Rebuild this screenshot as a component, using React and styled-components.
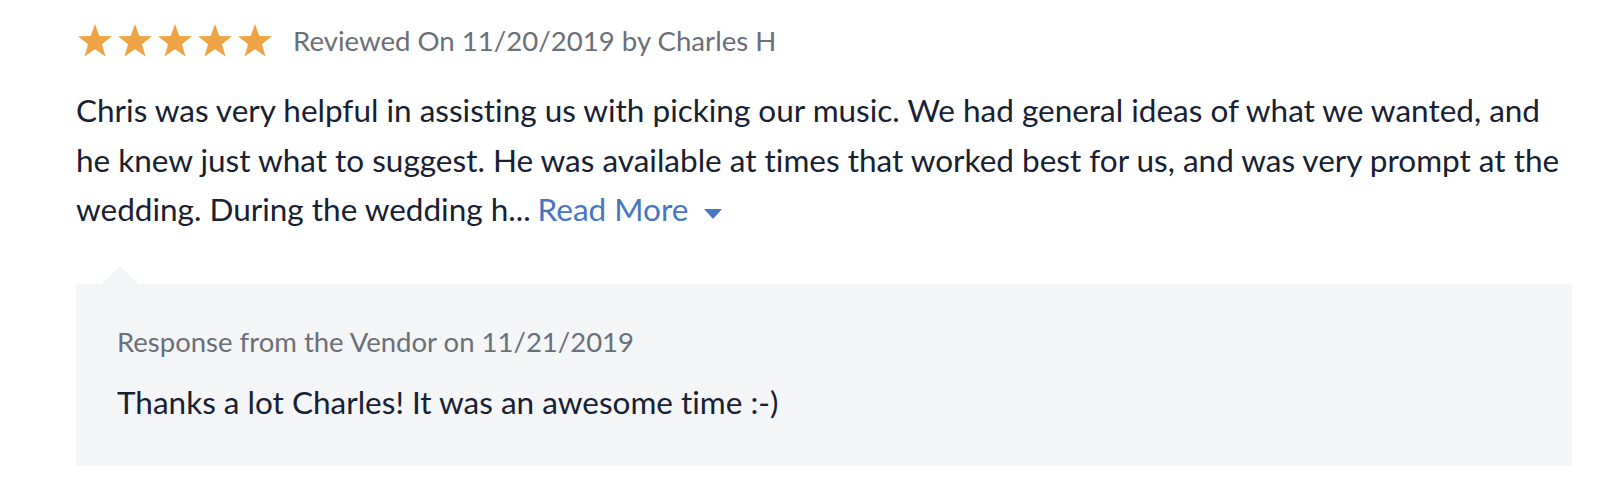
import React from "react";
import styled, { createGlobalStyle } from "styled-components";

const GlobalStyle = createGlobalStyle`
  html, body {
    margin: 0;
    padding: 0;
    background: #ffffff;
  }
  body {
    font-family: Lato, "Open Sans", "Liberation Sans", sans-serif;
    font-variant-ligatures: none;
    -webkit-font-smoothing: antialiased;
  }
`;

const Review = styled.article`
  width: 1496px;
  margin-left: 76px;
  padding-top: 23px;
`;

const Header = styled.div`
  display: flex;
  align-items: center;
  height: 34px;
`;

const Stars = styled.div`
  display: flex;
  gap: 6px;
  margin-left: 2px;
`;

const StarIcon = styled.svg`
  display: block;
  width: 34px;
  height: 33px;
  fill: ${(p) => (p.$on ? "#eea445" : "#dfe1e5")};
`;

const Meta = styled.span`
  margin-left: 21px;
  margin-top: 1px;
  font-size: 27.6px;
  color: #6b6f78;
  line-height: 34px;
`;

const Body = styled.p`
  margin: 29px -4px 0 0;
  font-size: 31.5px;
  line-height: 49.6px;
  color: #172133;
`;

const ReadMore = styled.span`
  margin-left: 7px;
  color: #4776c2;
  cursor: pointer;
`;

const Caret = styled.span`
  display: inline-block;
  width: 0;
  height: 0;
  margin-left: 16px;
  vertical-align: 2px;
  border-left: 9px solid transparent;
  border-right: 9px solid transparent;
  border-top: 10px solid #4776c2;
`;

const Response = styled.section`
  position: relative;
  margin-top: 49px;
  padding: 38px 41px 40px;
  background: #f4f5f7;

  &::before {
    content: "";
    position: absolute;
    top: -18px;
    left: 26px;
    border-left: 18px solid transparent;
    border-right: 18px solid transparent;
    border-bottom: 18px solid #f4f5f7;
  }
`;

const ResponseMeta = styled.div`
  font-size: 27.5px;
  line-height: 40px;
  color: #6b6f78;
`;

const ResponseText = styled.p`
  margin: 16px 0 0;
  font-size: 31.5px;
  line-height: 48px;
  color: #172133;
`;

const Star = ({ on }) => (
  <StarIcon $on={on} viewBox="0 0 34 33">
    <polygon points="17,0 21.29,11.99 34,12.37 23.94,20.16 27.52,32.38 17,25.2 6.48,32.38 10.06,20.16 0,12.37 12.71,11.99" />
  </StarIcon>
);

export default function App() {
  const rating = 5;
  return (
    <>
      <GlobalStyle />
      <Review>
        <Header>
          <Stars>
            {[1, 2, 3, 4, 5].map((n) => (
              <Star key={n} on={n <= rating} />
            ))}
          </Stars>
          <Meta>Reviewed On 11/20/2019 by Charles H</Meta>
        </Header>
        <Body>
          Chris was very helpful in assisting us with picking our music. We had
          general ideas of what we wanted, and he knew just what to suggest. He
          was available at times that worked best for us, and was very prompt
          at the wedding. During the wedding h...
          <ReadMore>
            Read More
            <Caret />
          </ReadMore>
        </Body>
        <Response>
          <ResponseMeta>Response from the Vendor on 11/21/2019</ResponseMeta>
          <ResponseText>Thanks a lot Charles! It was an awesome time :-)</ResponseText>
        </Response>
      </Review>
    </>
  );
}
